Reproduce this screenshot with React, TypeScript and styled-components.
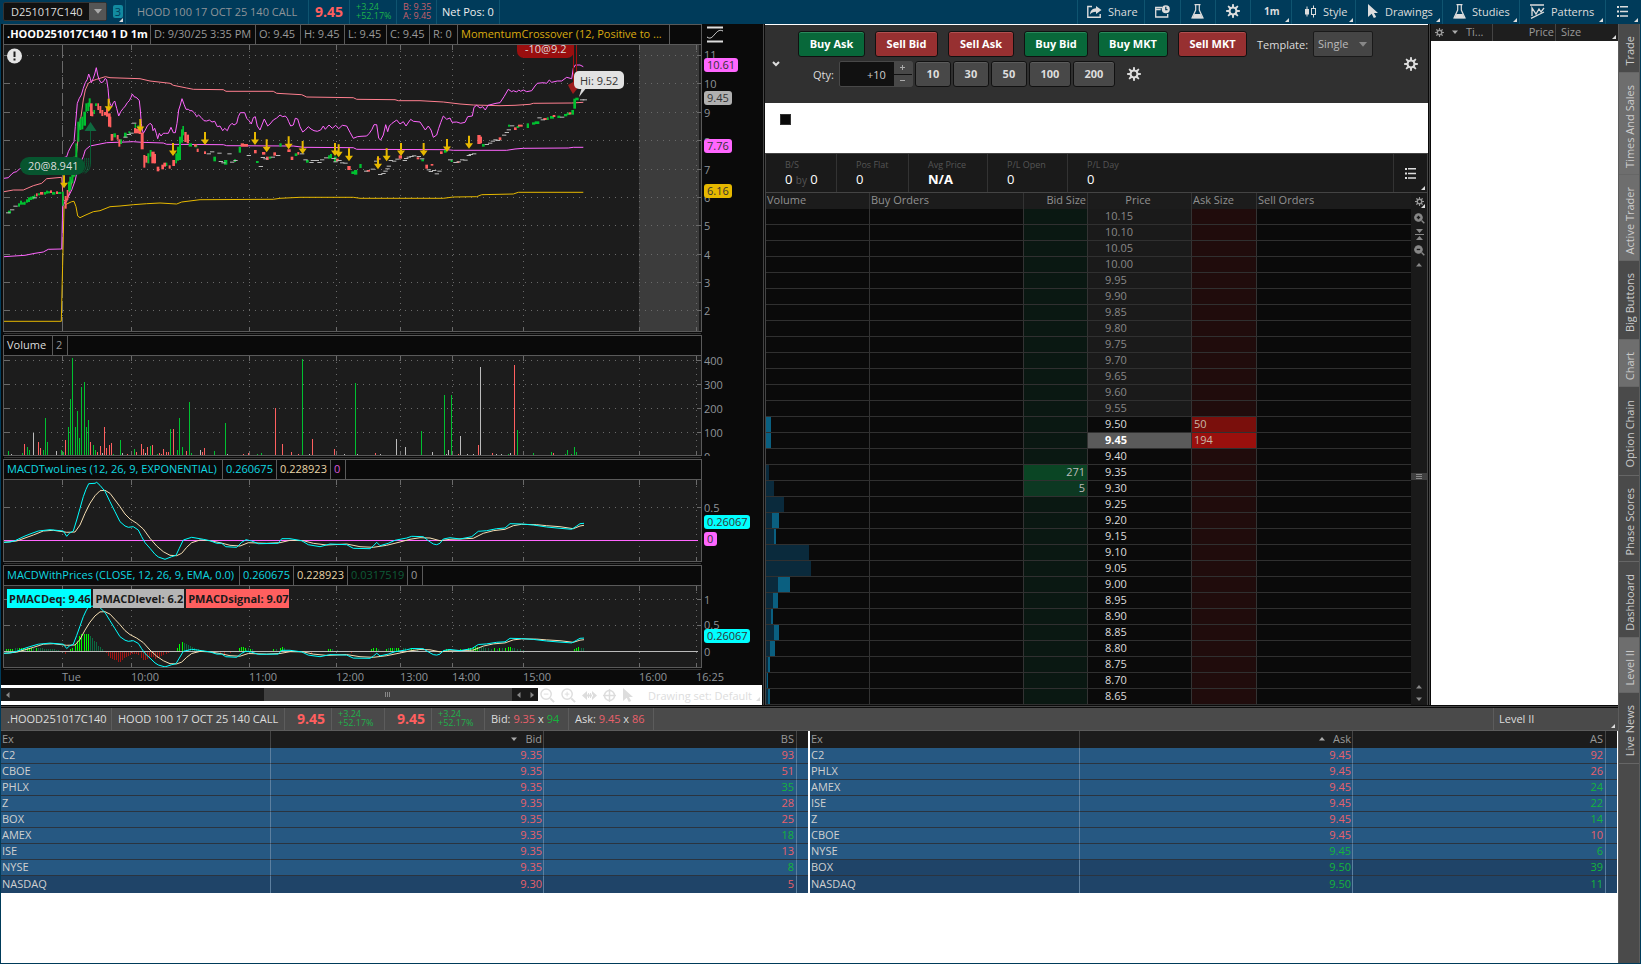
import React from "react";
import styled, { createGlobalStyle, css } from "styled-components";

const GlobalStyle = createGlobalStyle`
  * { box-sizing: border-box; }
  body { margin: 0; background: #fff; }
  body, button, input, select {
    font-family: "Open Sans", "Noto Sans", sans-serif;
    font-size: 11px;
    line-height: 15px;
  }
  button, input, select { margin: 0; padding: 0; border: 0; background: none; color: inherit; border-radius: 0; }
  button { cursor: pointer; }
  svg { display: block; flex: none; }
`;

const GREEN = "#00c030";
const RED = "#ff5f5f";
const MAGENTA = "#ff66ff";
const CYAN = "#00ffff";
const CREAM = "#f5deb3";
const YELLOW = "#e6b800";
const NAVY = "#003b5a";

/* ---------- shell ---------- */

const Shell = styled.div`
  display: flex;
  flex-direction: column;
  min-height: 100vh;
  background: ${NAVY};
  border: solid ${NAVY};
  border-width: 0 0 1px 1px;
  color: #ddd;
`;

const Body = styled.div`
  flex: 1;
  display: grid;
  grid-template-columns: minmax(0, 1fr) 22px;
  padding-right: 1px;
`;

const Workspace = styled.div`
  display: flex;
  flex-direction: column;
  background: #fff;
`;

const Panes = styled.div`
  display: grid;
  grid-template-columns: minmax(0, 761fr) 3px minmax(0, 663fr) 3px minmax(0, 187fr);
`;

const SplitV = styled.div`
  background: linear-gradient(90deg, #0a0a0a 0 1px, #444 1px 2px, #0a0a0a 2px);
`;

const SplitH = styled.div`
  height: 3px;
  flex: none;
  background: linear-gradient(#0a0a0a 0 1px, #444 1px 2px, #0a0a0a 2px);
`;

const Corner = styled.span`
  position: absolute;
  right: 2px;
  bottom: 2px;
  border: solid transparent;
  border-width: 2px;
  border-right-color: ${(p: { $c?: string }) => p.$c || "#ddd"};
  border-bottom-color: ${(p: { $c?: string }) => p.$c || "#ddd"};
`;

/* ---------- top bar ---------- */

const TopBar = styled.header`
  display: flex;
  height: 24px;
  background: ${NAVY};
`;

const barCell = css<{ $w: number; $pad?: number; $c?: string; $line?: string }>`
  position: relative;
  flex: none;
  display: flex;
  align-items: center;
  gap: 6px;
  width: ${(p) => p.$w}px;
  padding-left: ${(p) => p.$pad ?? 6}px;
  padding-bottom: 2px;
  color: ${(p) => p.$c || "#ddd"};
  border-right: 1px solid ${(p) => p.$line || "#0f5470"};
  white-space: nowrap;
`;

const BarCell = styled.div`${barCell}`;
const BarButton = styled.button`${barCell}`;

const Interval = styled.strong`font-size: 10px;`;

const Spacer = styled.div`flex: 1;`;

const SymbolBox = styled.div`
  display: flex;
  width: 104px;
  height: 19px;
  background: #111;
  border: 1px solid #333;
  border-radius: 2px;
`;

const SymbolInput = styled.input`
  flex: 1;
  min-width: 0;
  padding-left: 7px;
  color: #ddd;
  outline: 0;
`;

const DropButton = styled.button`
  width: 17px;
  display: grid;
  place-items: center;
  background: #555;
`;

const LinkButton = styled.button`
  width: 10px;
  height: 13px;
  border-radius: 2px;
  background: #128aa0;
  color: #003b5a;
  line-height: 13px;
`;

const BigPrice = styled.strong`
  font-size: 14px;
  color: ${RED};
`;

const Stack = styled.span`
  display: flex;
  flex-direction: column;
  font-size: 9px;
  line-height: 9px;
  color: ${(p: { $c: string }) => p.$c};
`;

const Tint = styled.span`color: ${(p: { $c: string }) => p.$c};`;

/* ---------- icons ---------- */

const Gear = ({ size = 13, color = "#ddd" }: { size?: number; color?: string }) => (
  <svg width={size} height={size} viewBox="0 0 14 14" fill="none" stroke={color}>
    <circle cx="7" cy="7" r="3.400" strokeWidth="1.900" />
    {[0, 45, 90, 135, 180, 225, 270, 315].map((a) => (
      <path key={a} d="M7.700 0 L8.300 3.400 L5.700 3.400 L6.300 0 Z" fill={color} stroke="none" transform={`rotate(${a} 7 7)`} />
    ))}
  </svg>
);

const ShareIcon = () => (
  <svg width="15" height="13" viewBox="0 0 15 13" fill="none" stroke="#ddd">
    <path d="M5 1.500H.8v10.700h12.400V9" strokeWidth="1.400" />
    <path d="M9 1l5.500 4L9 9V6.700C6 6.700 4.500 7.500 3 9.500 3.300 5.500 5.500 3.500 9 3.300z" fill="#ddd" stroke="none" />
  </svg>
);

const AlertIcon = () => (
  <svg width="15" height="13" viewBox="0 0 15 13" fill="none" stroke="#ddd">
    <path d="M7 2.500H.7v9.500h12V9M.7 4.500h5" strokeWidth="1.300" />
    <circle cx="10.800" cy="4.200" r="4" fill="#ddd" stroke="none" />
    <path d="M10.800 1.800v2.800h1.700" stroke={NAVY} strokeWidth="1.200" />
  </svg>
);

const Flask = () => (
  <svg width="13" height="15" viewBox="0 0 13 15" fill="none" stroke="#ddd">
    <path d="M3.500.7h6M4.700 1v5L1 14h11L8.300 6V1" strokeWidth="1.200" />
    <path d="M3.300 10h6.400l2 4.200H1.300z" fill="#ddd" stroke="none" />
  </svg>
);

const CandleIcon = () => (
  <svg width="13" height="13" viewBox="0 0 13 13" fill="none" stroke="#ddd">
    <path d="M3 1.500v10M9.500.5v3M9.500 9.500v3" />
    <rect x="1" y="4" width="4" height="5.500" fill="#ddd" stroke="none" />
    <rect x="7.500" y="3.500" width="4" height="6" />
  </svg>
);

const Pointer = ({ color = "#ddd" }: { color?: string }) => (
  <svg width="12" height="14" viewBox="0 0 12 14">
    <path d="M1 0l10 9H7l2.200 4-2.400 1L4.700 9.800 1 13z" fill={color} />
  </svg>
);

const PatternIcon = () => (
  <svg width="15" height="15" viewBox="0 0 15 15" fill="none" stroke="#ddd" strokeWidth="1.300">
    <path d="M0 1h14M1 14.300L14 8M2 12V4l4 6 3-5 2 3 3-4" />
  </svg>
);

const ListIcon = () => (
  <svg width="11" height="11" viewBox="0 0 11 11" fill="#ddd">
    <path d="M0 0h2v2H0zM3 0h8v1.500H3zM0 4.500h2v2H0zM3 4.700h8v1.500H3zM0 9h2v2H0zM3 9.200h8v1.500H3z" />
  </svg>
);

const Tri = ({ dir, size = 6, color = "#aaa" }: { dir: "up" | "down" | "left" | "right"; size?: number; color?: string }) => {
  const turn = { up: 0, right: 90, down: 180, left: 270 }[dir];
  return (
    <svg width={size} height={size} viewBox="0 0 6 6">
      <path d="M0 4.500L3 1l3 3.500z" fill={color} transform={`rotate(${turn} 3 3)`} />
    </svg>
  );
};

const Lens = ({ sign, color, filled, size }: { sign: "+" | "-"; color: string; filled?: boolean; size: number }) => (
  <svg width={size} height={size} viewBox="0 0 16 16" fill="none" stroke={color} strokeWidth="1.500">
    <circle cx="6.500" cy="6.500" r="5.500" fill={filled ? color : "none"} />
    <path d="M11 11l4 4" strokeWidth="2" />
    <path d={sign === "+" ? "M4 6.500h5M6.500 4v5" : "M4 6.500h5"} stroke={filled ? "#1a1a1a" : color} strokeWidth={filled ? 2 : 1} />
  </svg>
);

/* ---------- chart ---------- */

const ChartPane = styled.section`
  display: flex;
  flex-direction: column;
  gap: 3px;
  padding-left: 2px;
  background: #0a0a0a;
`;

const Study = styled.div`
  display: grid;
  grid-template-columns: minmax(0, 1fr) 60px;
`;

const StudyBox = styled.div`
  border: 1px solid #5a5a5a;
  box-shadow: 0 2px 0 -1px #0a0a0a, 0 3px 0 -1px #333;
`;

const StudyHead = styled.div`
  display: flex;
  height: 20px;
  border-bottom: 1px solid #5a5a5a;
  overflow: hidden;
`;

const HeadCell = styled.div<{ $w: number; $c?: string; $b?: boolean }>`
  flex: none;
  width: ${(p) => p.$w}px;
  padding-left: 3px;
  line-height: 18px;
  border-right: 1px solid #5a5a5a;
  color: ${(p) => p.$c || "#999"};
  font-weight: ${(p) => (p.$b ? 700 : 400)};
  white-space: nowrap;
`;

const PlotWrap = styled.div`
  position: relative;
  background: #1c1c1c;
`;

const TagRow = styled.div`
  position: absolute;
  top: 3px;
  left: 3px;
  display: flex;
  gap: 2px;
`;

const PriceTag = styled.span<{ $bg: string }>`
  padding: 0 1px 0 2px;
  line-height: 19px;
  font-weight: 700;
  color: #1a1a1a;
  background: ${(p) => p.$bg};
  white-space: nowrap;
`;

const TICKS_X = [131, 249, 336, 400, 452, 523];

/* Plot coordinates are in workspace pixels; the group shift brings them to the plot's own origin. */
const Plot = ({ top, h, rows, children, shade }: { top: number; h: number; rows: number[]; children?: React.ReactNode; shade?: boolean }) => {
  const bottom = top + h;
  return (
    <svg width="100%" height={h} shapeRendering="auto">
      <g transform={`translate(-4 ${-top})`}>
        {shade && <rect x="639" y={top} width="60" height={h} fill="#3c3c3c" />}
        <g stroke="#6a6a6a" shapeRendering="crispEdges">
          {rows.map((y) => (
            <g key={y}>
              <line x1="9" x2="699" y1={y + 0.5} y2={y + 0.5} strokeDasharray="1 5" />
              <path d={`M4 ${y + 0.5}h5M697 ${y + 0.5}h4`} />
            </g>
          ))}
          <line x1="62.5" x2="62.5" y1={top} y2={bottom} strokeDasharray={shade ? "12 4" : "1 5"} />
          {[62, ...TICKS_X, 639, 696].map((x) => (
            <g key={x}>
              <line x1={x + 0.5} x2={x + 0.5} y1={top} y2={bottom} strokeDasharray="1 5" />
              <path d={`M${x + 0.5} ${top}v5M${x + 0.5} ${bottom}v-4`} />
            </g>
          ))}
        </g>
        {children}
      </g>
    </svg>
  );
};

/* Series are stored at three units per pixel. */
const toPoints = (s: string, f: (y: number) => number = (y) => y) =>
  s.trim().split(/\s+/).map((p) => {
    const [x, y] = p.split(",").map(Number);
    return `${(x / 3).toFixed(1)},${(f(y) / 3).toFixed(1)}`;
  }).join(" ");

const Line = ({ data, color, map }: { data: string; color: string; map?: (y: number) => number }) => (
  <polyline points={toPoints(data, map)} fill="none" stroke={color} strokeWidth="1" />
);

const UPPER = `12,535 25,533 35,522 42,517 50,515 58,507 66,503 120,495 200,470 205,455 215,435 222,425 226,380 232,310 238,295 244,285 250,265 256,248 262,238 266,222 271,235 274,248 280,235 284,222 289,203 293,225 297,238 303,248 310,245 316,235 320,240 324,265 327,300 330,310 335,320 340,308 344,303 350,325 356,348 362,335 370,325 376,318 382,308 388,302 393,292 397,282 402,290 408,292 414,297 418,302 421,330 424,370 427,390 430,400 436,390 442,378 450,370 456,375 459,392 464,385 469,400 473,416 478,400 483,408 490,400 497,400 505,400 513,382 520,398 526,398 531,370 536,330 541,315 546,296 552,313 558,328 565,328 570,332 576,332 584,340 590,350 596,345 603,352 612,362 620,363 628,360 636,366 644,364 652,380 660,378 668,392 674,385 682,392 688,378 696,370 702,375 710,370 715,350 721,338 734,338 740,355 747,362 754,372 760,353 766,350 772,378 780,390 787,372 793,357 803,378 810,372 820,360 830,354 840,345 848,350 856,348 862,355 866,365 872,378 880,375 886,355 893,357 900,380 908,396 916,390 925,380 933,387 942,392 952,394 962,390 970,378 976,388 987,375 997,385 1007,376 1016,386 1027,376 1040,378 1050,397 1060,415 1072,410 1083,409 1100,408 1108,400 1116,388 1122,374 1130,374 1136,415 1142,420 1150,405 1157,374 1163,395 1168,378 1176,370 1190,360 1200,372 1210,365 1218,378 1226,366 1232,358 1240,364 1260,366 1268,378 1276,390 1285,378 1293,390 1300,412 1310,405 1316,385 1322,368 1330,348 1340,358 1350,354 1356,367 1370,366 1382,370 1395,367 1403,350 1417,348 1422,322 1430,316 1440,324 1448,320 1456,330 1464,316 1476,313 1488,310 1500,308 1512,290 1525,268 1535,275 1540,272 1550,276 1556,270 1562,274 1570,270 1580,275 1595,272 1605,258 1612,250 1630,248 1640,250 1648,240 1655,247 1672,243 1685,243 1700,232 1715,236 1720,205 1726,195 1740,195 1750,200`;
const AVERAGE = `12,575 40,570 70,570 100,557 125,550 140,536 185,532 190,600 200,605 210,570 225,500 232,440 236,390 243,350 250,300 256,270 265,250 275,243 290,238 316,230 330,233 420,236 450,243 510,250 520,256 560,264 580,268 670,269 678,274 820,274 830,280 905,284 920,291 1060,293 1070,298 1185,299 1195,302 1260,302 1330,306 1380,312 1420,315 1500,317 1545,316 1590,313 1600,310 1715,309 1750,307`;
const MIDDLE = `12,770 75,766 105,760 130,756 145,748 185,747 188,620 195,605 205,590 215,570 226,540 232,510 240,490 250,470 256,450 270,438 320,428 400,425 425,427 490,429 500,433 670,434 680,437 880,438 910,442 1060,443 1070,448 1340,449 1360,451 1520,451 1545,447 1570,445 1705,444 1720,442 1750,442`;
const LOWER = `12,964 184,964 192,620 200,612 215,605 222,604 228,620 233,648 240,653 255,646 280,635 300,632 330,620 360,618 400,614 440,611 480,609 530,612 545,606 600,599 820,598 840,595 900,592 1060,592 1080,595 1330,595 1360,591 1430,590 1445,584 1540,582 1555,577 1750,577`;

const UP_CANDLES = `24,632,8,9 54,610,10,6 60,602,12,6 66,607,7,8 72,605,9,5 78,598,10,6 84,592,14,6 90,590,10,6 96,588,10,6 102,584,11,4 114,580,6,6 132,576,8,6 138,572,9,6 144,574,6,6 156,576,8,10 174,576,6,10 186,575,42,5 204,545,30,6 208,530,40,6 214,520,30,6 220,470,60,6 226,430,80,6 232,365,60,6 238,355,35,6 244,350,38,6 250,335,42,8 256,310,25,6 262,308,25,6 266,295,25,6 280,330,12,5 285,310,8,6 340,400,12,8 360,418,14,6 372,398,14,8 385,394,6,6 404,372,25,4 412,376,8,6 442,460,30,6 449,450,20,6 496,488,10,6 526,460,30,5 531,440,42,6 537,410,70,6 543,388,40,6 547,378,28,5 566,430,10,10 584,434,8,8 640,470,14,8 672,480,14,10 702,478,8,6 716,440,18,7 768,483,6,8 806,470,6,8 838,430,10,7 884,460,8,8 918,480,8,8 984,466,10,8 990,462,12,6 1002,470,16,8 1054,514,8,8 1062,510,14,10 1078,492,12,7 1264,478,6,8 1332,450,8,8 1352,480,6,6 1446,432,8,8 1524,374,6,6 1550,378,6,8 1580,370,14,7 1596,367,7,10 1604,364,8,14 1640,352,8,6 1650,348,8,12 1672,347,7,9 1692,342,7,10 1700,338,7,12 1714,330,14,8 1720,296,30,8 1726,293,8,10`;
const DOWN_CANDLES = `108,580,9,5 120,576,8,10 150,571,8,6 168,574,8,6 194,588,38,6 200,570,30,5 270,310,38,8 274,335,14,6 292,310,20,5 298,318,22,6 304,330,18,6 312,336,10,6 318,325,25,6 324,340,40,8 329,350,32,5 332,402,20,8 350,405,14,6 355,418,22,6 402,384,16,6 408,386,14,10 416,390,12,8 422,398,50,9 430,465,38,6 436,468,20,6 454,455,35,10 462,462,28,6 470,500,14,8 484,494,14,8 490,488,12,8 506,496,10,6 517,480,18,8 553,396,30,7 560,404,26,7 582,432,8,8 590,446,10,6 612,454,8,6 722,430,10,10 732,432,8,12 762,450,10,8 786,456,8,10 798,470,10,8 820,457,10,8 862,448,8,10 872,470,10,8 892,456,8,6 1008,476,8,8 1042,498,12,10 1100,510,5,10 1130,475,4,12 1196,466,10,10 1250,472,6,8 1276,494,12,8 1292,492,5,8 1320,454,8,8 1370,484,5,8 1432,405,27,10 1438,410,20,8 1496,412,8,8 1542,382,8,8 1554,374,6,14 1630,354,6,10 1658,345,6,8 1706,337,6,8`;
const FLAT_CANDLES = `18,637 30,628 40,617 98,592 370,410 380,402 388,398 396,368 620,460 630,454 652,458 682,460 656,483 664,487 690,485 700,480 740,465 776,498 782,471 790,475 812,470 828,465 900,460 910,478 928,486 932,480 944,480 952,486 960,478 972,472 994,474 1000,484 1012,480 1020,487 1030,488 1092,512 1112,506 1122,482 1134,522 1144,519 1150,512 1156,505 1160,497 1166,480 1176,482 1186,476 1208,480 1212,474 1220,470 1228,468 1236,466 1250,468 1260,475 1280,508 1286,513 1296,510 1304,520 1312,512 1344,478 1360,486 1370,484 1380,478 1390,479 1400,465 1406,462 1416,460 1454,432 1464,428 1472,422 1480,418 1488,420 1506,404 1514,396 1520,388 1530,376 1612,352 1622,358 1680,350 1740,298 1748,298`;

const Candles = ({ data, color }: { data: string; color: string }) => (
  <g fill={color}>
    {data.split(" ").map((c) => {
      const [x, y, h = 2, w = 13] = c.split(",").map(Number);
      return <rect key={c} x={x / 3} y={y / 3} width={w / 3} height={Math.max(1, h / 3)} />;
    })}
  </g>
);

const SELL_MARKS: [number, number][] = [
  [192, 565], [326, 335], [421, 396], [519, 468], [615, 435], [765, 435], [800, 457], [866, 448], [908, 462],
  [1005, 468], [1016, 472], [1047, 484], [1134, 508], [1160, 484], [1203, 468], [1271, 468], [1341, 456], [1407, 446],
];

const PricePlot = () => (
  <Plot top={45} h={286} rows={[55, 83, 112, 140, 169, 197, 225, 254, 282, 310]} shade>
    <Line data={LOWER} color={YELLOW} />
    <Line data={AVERAGE} color="#ff7f8f" />
    <Line data={MIDDLE} color={MAGENTA} />
    <Line data={UPPER} color={MAGENTA} />
    <Candles data={UP_CANDLES} color={GREEN} />
    <Candles data={DOWN_CANDLES} color={RED} />
    <Candles data={FLAT_CANDLES} color="#bbb" />
    <g fill={YELLOW}>
      {SELL_MARKS.map(([x, y]) => (
        <path key={x} transform={`translate(${x / 3} ${y / 3})`} d="M0 0l-4-5.500h3V-13h2v7.500h3z" />
      ))}
    </g>
    <g fill="none" stroke="#0b5c36">
      <path d="M90.500 130v32c0 6-2 9-5 11M88.500 158c1 6-1 13-4 15M86.500 158c1 6-1 13-4 15M84.500 158c1 6-1 13-4 15" />
      <path d="M90.500 122l6 9h-12z" fill="#0f6a40" stroke="none" />
    </g>
    <rect x="20" y="157" width="65" height="18" rx="9" fill="#07552f" />
    <text x="28" y="170" fill="#ddd">20@8.941</text>
    <path d="M573.500 45v40M576.500 45v40" stroke="#a01010" fill="none" />
    <path d="M568 85l5-3 5 3-1 4-4 5-3-5z" fill="#9c1c1c" />
    <rect x="517" y="32" width="57" height="26" rx="7" fill="#9a0f0f" />
    <text x="525" y="53" fill="#ddd">-10@9.2</text>
    <path d="M579 97l3-10 5 0z" fill="#ddd" />
    <rect x="574" y="71" width="50" height="18" rx="5" fill="#e2e2e2" />
    <text x="580" y="85" fill="#333">Hi: 9.52</text>
    <circle cx="14.500" cy="56" r="7.500" fill="#e4e4e4" />
    <path d="M14.500 51.500v5.500M14.500 58.500v2" stroke="#1c1c1c" strokeWidth="2" />
  </Plot>
);

const VOLUME = `25,12g 34,4w 68,6g 73,34r 82,25g 88,16g 100,67w 115,38r 121,22r 130,16g 136,112g 142,40g 169,12w 184,16g 190,10g 196,44r 205,85g 211,167g 217,290g 226,85g 232,133g 238,50g 244,203g 253,218g 259,85g 265,106g 271,38r 280,30g 286,16g 292,10r 301,26r 307,7w 313,85r 319,20r 328,29r 334,35r 340,4g 361,46g 367,7w 382,4r 403,19g 409,10r 424,34r 430,17r 436,6w 442,23r 451,26g 457,29r 472,4g 478,7r 484,4r 490,17r 499,10r 505,8r 511,77g 520,77r 532,14g 538,110g 547,25g 559,13r 568,158g 574,7g 601,16w 607,8r 613,20r 643,13g 676,95g 682,4w 730,4r 745,7r 772,4g 784,7g 826,142r 847,34r 874,10r 895,4r 907,287g 928,4w 937,47r 1003,17r 1033,4w 1066,215g 1072,4w 1126,7r 1141,4w 1189,49w 1216,23w 1264,71g 1297,10w 1333,179g 1339,4w 1345,14w 1354,179g 1375,4r 1381,56w 1402,4w 1420,4w 1435,29r 1441,263w 1477,7r 1489,4w 1504,4w 1525,4g 1531,7w 1543,269r 1552,74g 1600,7g 1654,10g 1660,7r 1696,4g 1702,16g 1714,4g 1723,25g 1729,10g`;
const HIST = `18,6g 24,5g 30,6g 36,6g 45,8d 51,8d 57,8g 63,10g 69,9g 75,9d 81,8g 87,10g 93,10g 99,10d 110,9g 116,8d 122,8d 128,8d 134,7d 140,7d 146,6d 152,5d 158,5d 164,5d 170,4d 176,3d 196,-8r 212,6g 218,8g 226,18g 232,30g 238,46g 244,50g 253,50g 259,50g 265,50g 271,44d 277,38d 283,30d 289,26d 295,16d 301,12d 307,5d 319,-6r 325,-14r 331,-22r 337,-25r 343,-26r 349,-27r 355,-32r 361,-32r 367,-27r 373,-20r 379,-18r 385,-15r 391,-12r 397,-10r 403,-10r 409,-10r 415,-11r 424,-22r 430,-26r 436,-26r 442,-25r 448,-22r 454,-19r 460,-19r 466,-24r 472,-20r 478,-17r 484,-15r 490,-12r 499,-9r 505,-6r 532,10g 538,20g 547,26g 553,24d 559,22d 565,18d 571,14d 577,12d 583,9d 589,7d 595,5d 610,4d 660,-6r 672,-10r 690,-6r 718,9g 724,11g 730,11g 736,10g 745,8d 751,7g 757,6d 820,5g 830,5d 841,10g 847,11g 853,8d 915,-5r 935,-5r 985,5g 991,6g 997,5d 1012,4d 1055,-6r 1115,6g 1121,8g 1130,10g 1136,5d 1160,6g 1166,8d 1172,8g 1178,9g 1184,9d 1190,10g 1196,10g 1211,9d 1217,8d 1235,8g 1241,6d 1253,5d 1340,6g 1346,6g 1382,5g 1405,8g 1411,9g 1420,10g 1426,12g 1432,13g 1438,12d 1444,11d 1450,11d 1456,10d 1465,8d 1474,7d 1483,8g 1492,7d 1498,8g 1507,8d 1516,9g 1525,11g 1531,12g 1537,9d 1543,8d 1552,7d 1561,6d 1570,4d 1723,6g 1729,8g 1735,11g 1744,8d 1750,8d`;

const Bars = ({ data, base, colors }: { data: string; base: number; colors: Record<string, string> }) => (
  <g shapeRendering="crispEdges">
    {data.split(" ").map((b) => {
      const [, x, v, k] = b.match(/^(\d+),(-?\d+)(\w)$/)!;
      const h = Math.max(1, Math.abs(Number(v)) / 3);
      return <rect key={b} x={Math.round(Number(x) / 3 - 0.4)} y={Number(v) < 0 ? base : base - h} width="1" height={h} fill={colors[k]} />;
    })}
  </g>
);

const MACD = `12,1627 30,1626 45,1622 60,1615 75,1608 90,1602 115,1593 150,1589 190,1593 200,1609 208,1600 220,1593 230,1560 240,1525 250,1490 258,1468 266,1451 285,1450 290,1447 300,1456 315,1474 330,1505 345,1535 360,1565 375,1578 385,1582 400,1580 415,1590 425,1610 435,1628 450,1645 465,1663 475,1671 495,1678 515,1670 528,1666 538,1645 550,1620 575,1612 610,1618 630,1622 650,1630 665,1630 677,1640 710,1642 725,1627 738,1619 755,1623 775,1631 835,1630 845,1616 870,1616 905,1622 925,1634 960,1640 990,1632 1040,1634 1060,1645 1110,1646 1120,1638 1130,1627 1140,1637 1165,1630 1185,1621 1200,1618 1220,1614 1235,1609 1270,1610 1285,1622 1300,1632 1310,1634 1320,1630 1330,1617 1350,1613 1380,1617 1415,1610 1435,1594 1460,1592 1490,1586 1515,1584 1530,1571 1565,1572 1600,1575 1640,1581 1680,1585 1715,1588 1730,1578 1740,1571 1752,1570`;
const SIGNAL = `12,1627 50,1623 100,1605 130,1593 160,1591 200,1597 225,1596 240,1575 255,1540 270,1510 285,1487 300,1472 315,1471 330,1480 345,1500 360,1520 375,1542 390,1557 410,1570 430,1587 450,1615 470,1638 490,1655 510,1666 530,1667 545,1660 560,1642 575,1628 600,1620 630,1622 660,1628 690,1636 720,1638 745,1628 800,1630 840,1628 870,1621 910,1622 940,1630 980,1635 1040,1632 1080,1640 1120,1642 1160,1636 1200,1626 1230,1618 1260,1613 1290,1614 1320,1622 1350,1618 1380,1617 1420,1615 1450,1600 1480,1592 1515,1588 1540,1577 1565,1573 1610,1574 1640,1577 1680,1580 1720,1586 1740,1578 1752,1576`;
const toPriceMacd = (y: number) => 1955 + (y - 1621) * 0.8;

const AxisSvg = styled.svg`
  width: 60px;
  height: 0;
  min-height: 100%;
  overflow: hidden;
`;

const Axis = ({ top, labels, tags, children }: {
  top: number;
  labels: [number, string][];
  tags?: [number, string, string, number][];
  children?: React.ReactNode;
}) => (
  <AxisSvg>
    <g transform={`translate(-702 ${-top})`}>
      <g fill="#8f9499">
        {labels.map(([y, t]) => <text key={t} x="704" y={y + 4}>{t}</text>)}
      </g>
      {tags?.map(([y, t, c, w]) => (
        <g key={t}>
          <rect x="704" y={y - 7} width={w} height="14" rx="3" fill={c} />
          <text x="707" y={y + 4} fill="#333">{t}</text>
        </g>
      ))}
      {children}
    </g>
  </AxisSvg>
);

const TimeAxis = styled.svg`
  width: 100%;
  height: 17px;
  margin-top: -3px;
`;

const ScrollRow = styled.div`
  display: flex;
  align-items: center;
  height: 20px;
  margin: -3px 0 0 -2px;
  background: #fff;
  color: #ddd;
  position: relative;
`;

const ScrollTrack = styled.div`
  display: flex;
  flex: 1;
  align-items: stretch;
  height: 13px;
  margin-bottom: 1px;
  background: #1a1a1a;
`;

const ScrollArrow = styled.button`
  width: 13px;
  display: grid;
  place-items: center;
`;

const ScrollThumb = styled.div`
  width: 248px;
  margin-left: auto;
  display: grid;
  place-items: center;
  background: #404040;
  color: #888;
`;

const DrawTools = styled.div`
  position: relative;
  width: 224px;
  display: flex;
  align-items: center;
  padding-left: 2px;
  gap: 6px;
`;

const ToolButton = styled.button`display: grid; place-items: center;`;

const DrawingSet = styled.button`
  margin-left: 8px;
  color: #ddd;
  white-space: nowrap;
`;

const Charts = () => (
  <ChartPane>
    <Study>
      <StudyBox>
        <StudyHead>
          <HeadCell $w={147} $c="#fff" $b>.HOOD251017C140 1 D 1m</HeadCell>
          <HeadCell $w={105}>D: 9/30/25 3:35 PM</HeadCell>
          <HeadCell $w={45}>O: 9.45</HeadCell>
          <HeadCell $w={44}>H: 9.45</HeadCell>
          <HeadCell $w={42}>L: 9.45</HeadCell>
          <HeadCell $w={43}>C: 9.45</HeadCell>
          <HeadCell $w={28}>R: 0</HeadCell>
          <HeadCell $w={212} $c="#d9ab10">MomentumCrossover (12, Positive to ...</HeadCell>
        </StudyHead>
        <PlotWrap><PricePlot /></PlotWrap>
      </StudyBox>
      <Axis
        top={24}
        labels={[[55, "11"], [84, "10"], [113, "9"], [142, "8"], [170, "7"], [198, "6"], [226, "5"], [255, "4"], [283, "3"], [311, "2"]]}
        tags={[[65, "10.61", MAGENTA, 34], [98, "9.45", "#b0b0b0", 28], [146, "7.76", MAGENTA, 28], [191, "6.16", YELLOW, 28]]}
      >
        <rect x="702" y="24" width="60" height="24" fill="#0a0a0a" />
        <path d="M707 27.500h16M707 41.500h16" stroke="#ddd" strokeWidth="2" />
        <path d="M707 37c4 3 6-1 8-3s4-5 8-3" stroke="#ddd" fill="none" />
      </Axis>
    </Study>
    <Study>
      <StudyBox>
        <StudyHead>
          <HeadCell $w={49} $c="#ddd">Volume</HeadCell>
          <HeadCell $w={15}>2</HeadCell>
        </StudyHead>
        <PlotWrap>
          <Plot top={356} h={99} rows={[360, 384, 408, 432]}>
            <Bars data={VOLUME} base={455} colors={{ g: GREEN, r: RED, w: "#bbb" }} />
          </Plot>
        </PlotWrap>
      </StudyBox>
      <Axis top={335} labels={[[361, "400"], [385, "300"], [409, "200"], [433, "100"], [457, "0"]]} />
    </Study>
    <Study>
      <StudyBox>
        <StudyHead>
          <HeadCell $w={219} $c="#10d8e0">MACDTwoLines (12, 26, 9, EXPONENTIAL)</HeadCell>
          <HeadCell $w={54} $c="#10d8e0">0.260675</HeadCell>
          <HeadCell $w={54} $c="#e8d5a8">0.228923</HeadCell>
          <HeadCell $w={15} $c="#d958d9">0</HeadCell>
        </StudyHead>
        <PlotWrap>
          <Plot top={480} h={81} rows={[507]}>
            <path d="M4 540.500H698" stroke={MAGENTA} />
            <Line data={SIGNAL} color={CREAM} />
            <Line data={MACD} color={CYAN} />
          </Plot>
        </PlotWrap>
      </StudyBox>
      <Axis top={459} labels={[[508, "0.5"]]} tags={[[522, "0.26067", CYAN, 46], [539, "0", MAGENTA, 13]]} />
    </Study>
    <Study>
      <StudyBox>
        <StudyHead>
          <HeadCell $w={236} $c="#10d8e0">MACDWithPrices (CLOSE, 12, 26, 9, EMA, 0.0)</HeadCell>
          <HeadCell $w={54} $c="#10d8e0">0.260675</HeadCell>
          <HeadCell $w={54} $c="#e8d5a8">0.228923</HeadCell>
          <HeadCell $w={60} $c="#0f5a38">0.0317519</HeadCell>
          <HeadCell $w={15}>0</HeadCell>
        </StudyHead>
        <PlotWrap>
          <Plot top={586} h={81} rows={[599, 625]}>
            <Bars data={HIST} base={651} colors={{ g: "#00ff00", d: "#0b6a40", r: "#a01414" }} />
            <path d="M4 651.500H698" stroke="#bbb" />
            <Line data={SIGNAL} color={CREAM} map={toPriceMacd} />
            <Line data={MACD} color={CYAN} map={toPriceMacd} />
          </Plot>
          <TagRow>
            <PriceTag $bg={CYAN}>PMACDeq: 9.46</PriceTag>
            <PriceTag $bg="#b5b5b5">PMACDlevel: 6.2</PriceTag>
            <PriceTag $bg={RED}>PMACDsignal: 9.07</PriceTag>
          </TagRow>
        </PlotWrap>
      </StudyBox>
      <Axis top={565} labels={[[600, "1"], [625, "0.5"], [652, "0"]]} tags={[[636, "0.26067", CYAN, 46]]} />
    </Study>
    <TimeAxis>
      <g transform="translate(-3 0)" fill="#8f9499">
        {([[62, "Tue"], [131, "10:00"], [249, "11:00"], [336, "12:00"], [400, "13:00"], [452, "14:00"], [523, "15:00"], [639, "16:00"], [696, "16:25"]] as [number, string][]).map(
          ([x, t]) => <text key={t} x={x} y="13">{t}</text>,
        )}
      </g>
    </TimeAxis>
    <ScrollRow>
      <ScrollTrack>
        <ScrollArrow aria-label="Scroll left"><Tri dir="left" color="#888" /></ScrollArrow>
        <ScrollThumb>
          <svg width="6" height="5" stroke="#888"><path d="M.5 0v5M2.500 0v5M4.500 0v5" /></svg>
        </ScrollThumb>
        <ScrollArrow aria-label="Step left"><Tri dir="left" color="#888" /></ScrollArrow>
        <ScrollArrow aria-label="Step right"><Tri dir="right" color="#888" /></ScrollArrow>
      </ScrollTrack>
      <DrawTools>
        <ToolButton aria-label="Zoom out"><Lens sign="-" color="#ddd" size={15} /></ToolButton>
        <ToolButton aria-label="Zoom in"><Lens sign="+" color="#ddd" size={15} /></ToolButton>
        <ToolButton aria-label="Pan">
          <svg width="15" height="11" viewBox="0 0 15 11" fill="#ddd"><path d="M0 5.500L5 1v9zM15 5.500L10 1v9zM6 3h1v5H6zM8 3h1v5H8zM4 4.500h7v2H4z" /></svg>
        </ToolButton>
        <ToolButton aria-label="Crosshair">
          <svg width="13" height="13" viewBox="0 0 13 13" fill="none" stroke="#ddd" strokeWidth="1.500"><circle cx="6.500" cy="6.500" r="5" /><path d="M6.500 0v13M0 6.500h13" /></svg>
        </ToolButton>
        <ToolButton aria-label="Pointer"><Pointer /></ToolButton>
        <DrawingSet>Drawing set: Default</DrawingSet>
        <Corner />
      </DrawTools>
    </ScrollRow>
  </ChartPane>
);

/* ---------- active trader ---------- */

const Trader = styled.section`
  display: flex;
  flex-direction: column;
  min-width: 0;
  background: #0a0a0a;
`;

const OrderBar = styled.div`
  display: flex;
  justify-content: space-between;
  height: 79px;
  border-top: 1px solid #fff;
  background: #303030;
`;

const SideButton = styled.button`
  width: 34px;
  display: grid;
  place-items: center;
  flex: none;
`;

const CollapseButton = styled(SideButton)`
  width: 33px;
  padding-right: 11px;
`;

const OrderLines = styled.div`
  flex: 1;
  display: flex;
  flex-direction: column;
  gap: 4px;
  padding-top: 6px;
`;

const OrderLine = styled.div<{ $gap: number; $indent?: number }>`
  display: flex;
  align-items: center;
  gap: ${(p) => p.$gap}px;
  padding-left: ${(p) => p.$indent || 0}px;
`;

const OrderButton = styled.button<{ $w: number; $buy?: boolean }>`
  width: ${(p) => p.$w}px;
  height: 26px;
  padding-bottom: 1px;
  flex: none;
  border: 1px solid #111;
  border-radius: 3px;
  background: ${(p) => (p.$buy ? "#08683a" : "#973031")};
  box-shadow: inset 0 1px 0 ${(p) => (p.$buy ? "#2a8a5c" : "#b05050")};
  color: #fff;
  font-weight: 700;
`;

const QtyButton = styled(OrderButton)`
  background: #484848;
  box-shadow: inset 0 1px 0 #5c5c5c;
  color: #ddd;
`;

const TemplateLabel = styled.label`
  display: flex;
  align-items: center;
  gap: 5px;
  white-space: nowrap;
`;

const SelectWrap = styled.span`
  position: relative;
  display: flex;
  svg { position: absolute; right: 6px; top: 9px; pointer-events: none; }
`;

const TemplateSelect = styled.select`
  appearance: none;
  width: 60px;
  height: 26px;
  padding-left: 4px;
  padding-bottom: 1px;
  background: #454545;
  border: 1px solid #1a1a1a;
  border-radius: 2px;
  color: #bbb;
`;

const QtyBox = styled.div`
  display: flex;
  width: 74px;
  height: 26px;
  margin-left: 3px;
  background: #111;
  border: 1px solid #484848;
  border-radius: 2px;
`;

const QtyInput = styled.input`
  flex: 1;
  min-width: 0;
  padding-right: 8px;
  text-align: right;
  color: #ccc;
  outline: 0;
`;

const Steps = styled.div`
  width: 18px;
  display: grid;
  gap: 1px;
  button { background: #484848; display: grid; place-items: center; }
`;

const Notice = styled.div`
  height: 50px;
  background: #fff;
  padding: 11px 15px;
`;

const NoticeBox = styled.div`
  width: 11px;
  height: 11px;
  background: #0a0a0a;
  border: 1px solid #333;
`;

const Positions = styled.dl`
  display: flex;
  margin: 0;
  height: 40px;
  background: #1a1a1a;
  border: 1px solid #444;
`;

const Position = styled.div<{ $w?: number }>`
  ${(p) => (p.$w ? `width: ${p.$w}px; border-right: 1px solid #333;` : "flex: 1;")}
  padding: 5px 0 0 19px;
  dt { font-size: 9px; line-height: 11px; color: #555; }
  dd { margin: 0; font-size: 13px; line-height: 18px; color: #fff; white-space: nowrap; }
  small { font-size: 10px; color: #555; }
`;

const MenuButton = styled.button`
  position: relative;
  width: 34px;
  display: grid;
  place-items: center;
  border-left: 1px solid #333;
`;

const LadderArea = styled.div`
  display: flex;
  border: solid #444;
  border-width: 0 1px;
`;

const Ladder = styled.table`
  flex: 1;
  min-width: 0;
  table-layout: fixed;
  width: 100%;
  border-spacing: 0;
  th, td { padding: 0; height: 16px; line-height: 13px; vertical-align: top; border-right: 1px solid #333; }
  th { font-weight: 400; text-align: left; color: #909090; background: #1c1c1c; padding-left: 1px; }
  td { border-bottom: 1px solid #303030; }
  th:last-child, td:last-child { border-right: 0; }
`;

const EndHead = styled.th`&&& { text-align: right; padding-right: 1px; }`;
const MidHead = styled.th`&&& { text-align: center; padding-right: 4px; }`;

const BidCell = styled.td<{ $on?: string }>`
  &&& { background: ${(p) => p.$on || "#0a1812"}; text-align: right; padding-right: 2px; color: #bbb; }
`;
const AskCell = styled.td<{ $on?: string }>`
  &&& { background: ${(p) => p.$on || "#200c0c"}; padding-left: 2px; color: #c8b8a8; }
`;
const PriceCell = styled.td<{ $kind: "off" | "on" | "last" }>`
  &&& {
    padding-left: 17px;
    background: ${(p) => ({ off: "#1a1a1a", on: "#0a0a0a", last: "#5a5a5a" })[p.$kind]};
    color: ${(p) => ({ off: "#888", on: "#ddd", last: "#fff" })[p.$kind]};
    font-weight: ${(p) => (p.$kind === "last" ? 700 : 400)};
  }
`;
const VolumeBar = styled.div`
  display: flex;
  height: 15px;
  i { background: #0a2a3c; }
  b { background: #0a5f80; }
`;

const LadderSide = styled.div`
  width: 16px;
  display: flex;
  flex-direction: column;
  align-items: center;
  background: #1a1a1a;
`;

const SideIcon = styled.button<{ $h: number }>`
  position: relative;
  width: 16px;
  height: ${(p) => p.$h}px;
  display: grid;
  place-items: center;
`;

const SideThumb = styled.div`
  width: 16px;
  height: 7px;
  background: #404040;
  display: grid;
  place-items: center;
`;

const PRICES = Array.from({ length: 31 }, (_, i) => ((1015 - i * 5) / 100).toFixed(2));
const VOL_AT: Record<string, [number, number]> = {
  "9.50": [0, 5], "9.45": [0, 5], "9.35": [3, 0], "9.30": [8, 0], "9.25": [18, 0], "9.20": [6, 7], "9.15": [8, 2],
  "9.10": [43, 0], "9.05": [45, 0], "9.00": [12, 12], "8.95": [7, 5], "8.90": [5, 2], "8.85": [8, 5],
  "8.80": [4, 5], "8.75": [2, 2], "8.70": [1, 1], "8.65": [2, 2],
};
const BIDS: Record<string, [string, string]> = { "9.35": ["271", "#0a4524"], "9.30": ["5", "#0d3822"] };
const ASKS: Record<string, [string, string]> = { "9.50": ["50", "#7a0f0c"], "9.45": ["194", "#9a100d"] };

const ActiveTrader = () => (
  <Trader>
    <OrderBar>
      <CollapseButton aria-label="Collapse">
        <svg width="8" height="6" fill="none" stroke="#ddd" strokeWidth="2"><path d="M1 1l3 3 3-3" /></svg>
      </CollapseButton>
      <OrderLines>
        <OrderLine $gap={10}>
          <OrderButton $w={67} $buy>Buy Ask</OrderButton>
          <OrderButton $w={63}>Sell Bid</OrderButton>
          <OrderButton $w={66}>Sell Ask</OrderButton>
          <OrderButton $w={64} $buy>Buy Bid</OrderButton>
          <OrderButton $w={70} $buy>Buy MKT</OrderButton>
          <OrderButton $w={69}>Sell MKT</OrderButton>
          <TemplateLabel>
            Template:
            <SelectWrap>
              <TemplateSelect defaultValue="Single"><option>Single</option></TemplateSelect>
              <Tri dir="down" size={8} color="#888" />
            </SelectWrap>
          </TemplateLabel>
        </OrderLine>
        <OrderLine $gap={2} $indent={15}>
          <label htmlFor="qty">Qty:</label>
          <QtyBox>
            <QtyInput id="qty" defaultValue="+10" />
            <Steps>
              <button aria-label="Increase"><svg width="5" height="5" stroke="#aaa"><path d="M0 2.500h5M2.500 0v5" /></svg></button>
              <button aria-label="Decrease"><svg width="5" height="5" stroke="#aaa"><path d="M0 2.500h5" /></svg></button>
            </Steps>
          </QtyBox>
          {[["10", 36], ["30", 36], ["50", 36], ["100", 42], ["200", 42]].map(([t, w]) => (
            <QtyButton key={t} $w={w as number}>{t}</QtyButton>
          ))}
          <SideButton aria-label="Quantity settings"><Gear size={14} /></SideButton>
        </OrderLine>
      </OrderLines>
      <SideButton aria-label="Settings"><Gear size={14} /></SideButton>
    </OrderBar>
    <Notice><NoticeBox /></Notice>
    <Positions>
      <Position $w={71}><dt>B/S</dt><dd>0 <small>by</small> 0</dd></Position>
      <Position $w={72}><dt>Pos Flat</dt><dd>0</dd></Position>
      <Position $w={79}><dt>Avg Price</dt><dd><strong>N/A</strong></dd></Position>
      <Position $w={80}><dt>P/L Open</dt><dd>0</dd></Position>
      <Position><dt>P/L Day</dt><dd>0</dd></Position>
      <MenuButton aria-label="Menu"><ListIcon /><Corner /></MenuButton>
    </Positions>
    <LadderArea>
      <Ladder>
        <colgroup>
          <col style={{ width: 104 }} /><col style={{ width: 154 }} /><col style={{ width: 64 }} />
          <col style={{ width: 104 }} /><col style={{ width: 65 }} /><col />
        </colgroup>
        <thead>
          <tr><th>Volume</th><th>Buy Orders</th><EndHead>Bid Size</EndHead><MidHead>Price</MidHead><th>Ask Size</th><th>Sell Orders</th></tr>
        </thead>
        <tbody>
          {PRICES.map((p) => (
            <tr key={p}>
              <td>
                {VOL_AT[p] && (
                  <VolumeBar><i style={{ width: VOL_AT[p][0] }} /><b style={{ width: VOL_AT[p][1] }} /></VolumeBar>
                )}
              </td>
              <td />
              <BidCell $on={BIDS[p]?.[1]}>{BIDS[p]?.[0]}</BidCell>
              <PriceCell $kind={p === "9.45" ? "last" : Number(p) > 9.52 ? "off" : "on"}>{p}</PriceCell>
              <AskCell $on={ASKS[p]?.[1]}>{ASKS[p]?.[0]}</AskCell>
              <td />
            </tr>
          ))}
        </tbody>
      </Ladder>
      <LadderSide>
        <SideIcon $h={17} aria-label="Columns"><Gear size={9} color="#999" /><Corner /></SideIcon>
        <SideIcon $h={16} aria-label="Zoom in"><Lens sign="+" color="#888" filled size={11} /></SideIcon>
        <SideIcon $h={16} aria-label="Center">
          <svg width="9" height="11" viewBox="0 0 9 11" fill="#888"><path d="M1 0h7L4.500 4zM0 5h9v1H0zM1 11h7L4.500 7z" /></svg>
        </SideIcon>
        <SideIcon $h={16} aria-label="Zoom out"><Lens sign="-" color="#888" filled size={11} /></SideIcon>
        <SideIcon $h={14} aria-label="Page up"><Tri dir="up" color="#888" /></SideIcon>
        <Spacer />
        <SideThumb><svg width="6" height="5" stroke="#888"><path d="M0 .5h6M0 2.500h6M0 4.500h6" /></svg></SideThumb>
        <Spacer />
        <SideIcon $h={13} aria-label="Scroll up"><Tri dir="up" color="#888" /></SideIcon>
        <SideIcon $h={12} aria-label="Scroll down"><Tri dir="down" color="#888" /></SideIcon>
      </LadderSide>
    </LadderArea>
  </Trader>
);

/* ---------- time and sales ---------- */

const Tape = styled.section`background: #fff;`;

const TapeHead = styled.div`
  position: relative;
  display: flex;
  align-items: center;
  height: 17px;
  background: #1e1e1e;
  color: #999;
`;

const TapeCell = styled.div<{ $w?: number; $end?: boolean }>`
  ${(p) => (p.$w ? `width: ${p.$w}px; border-right: 1px solid #444;` : "flex: 1; padding-left: 5px;")}
  display: flex;
  align-items: center;
  height: 17px;
  line-height: 16px;
  gap: 8px;
  justify-content: ${(p) => (p.$end ? "flex-end" : "flex-start")};
  padding-right: 1px;
  padding-bottom: 1px;
`;

const IconPad = styled.span`padding-left: 4px;`;

/* ---------- level II ---------- */

const LevelBar = styled.div`
  display: flex;
  height: 23px;
  background: #4a4a4a;
  border-bottom: 1px solid #5c5c5c;
  color: #ddd;
`;

const Books = styled.div`
  display: grid;
  grid-template-columns: minmax(0, 1fr) minmax(0, 1fr);
  gap: 2px;
  padding-right: 1px;
`;

const Book = styled.table`
  width: 100%;
  table-layout: fixed;
  border-spacing: 0;
  align-self: start;
  th, td { padding: 0 1px; vertical-align: top; text-align: right; border-right: 1px solid #5c7f9f; }
  th { height: 17px; font-weight: 400; color: #999; background: #1c1c1c; border-right-color: #444; }
  td { height: 16px; line-height: 13px; border-bottom: 1px solid #2a3440; }
  th:first-child, td:first-child { text-align: left; }
  th:nth-child(3), td:nth-child(3) { padding-right: 2px; }
  th:last-child, td:last-child { border-right: 0; }
  tbody tr:last-child td { height: 17px; line-height: 15px; border-bottom: 0; }
`;

const BookRow = styled.tr<{ $deep: boolean }>`
  background: ${(p) => (p.$deep ? "#1f4468" : "#265882")};
  color: #d0d0d0;
`;

const SortHead = styled.span`
  display: flex;
  justify-content: flex-end;
  align-items: center;
  gap: 8px;
`;

const BookNum = styled.td<{ $up: boolean }>`color: ${(p) => (p.$up ? "#14b43c" : "#e8606a")};`;

type Quote = [string, string, boolean, string, boolean, boolean?];
const BID_ROWS: Quote[] = [
  ["C2", "9.35", false, "93", false], ["CBOE", "9.35", false, "51", false], ["PHLX", "9.35", false, "35", true],
  ["Z", "9.35", false, "28", false], ["BOX", "9.35", false, "25", false], ["AMEX", "9.35", false, "18", true],
  ["ISE", "9.35", false, "13", false], ["NYSE", "9.35", false, "8", true], ["NASDAQ", "9.30", false, "5", false, true],
];
const ASK_ROWS: Quote[] = [
  ["C2", "9.45", false, "92", false], ["PHLX", "9.45", false, "26", false], ["AMEX", "9.45", false, "24", true],
  ["ISE", "9.45", false, "22", true], ["Z", "9.45", false, "14", true], ["CBOE", "9.45", false, "10", false],
  ["NYSE", "9.45", true, "6", true], ["BOX", "9.50", true, "39", true, true], ["NASDAQ", "9.50", true, "11", true, true],
];

const QuoteBook = ({ rows, side, size, dir }: { rows: Quote[]; side: string; size: string; dir: "up" | "down" }) => (
  <Book>
    <colgroup><col style={{ width: 270 }} /><col style={{ width: 273 }} /><col /><col style={{ width: 11 }} /></colgroup>
    <thead>
      <tr><th>Ex</th><th><SortHead><Tri dir={dir} />{side}</SortHead></th><th>{size}</th><th /></tr>
    </thead>
    <tbody>
      {rows.map(([ex, px, pxUp, n, nUp, deep]) => (
        <BookRow key={ex} $deep={!!deep}>
          <td>{ex}</td><BookNum $up={pxUp}>{px}</BookNum><BookNum $up={nUp}>{n}</BookNum><td />
        </BookRow>
      ))}
    </tbody>
  </Book>
);

/* ---------- gadget rail ---------- */

const Rail = styled.nav`
  display: flex;
  flex-direction: column;
  background: #4a4a4a;
  border: 1px solid #5c5c5c;
  border-width: 0 1px;
`;

const RailTab = styled.button<{ $h: number; $on?: boolean }>`
  height: ${(p) => p.$h}px;
  flex: none;
  display: grid;
  place-items: center;
  padding-top: 6px;
  background: ${(p) => (p.$on ? "#6e6e6e" : "#4a4a4a")};
  border-bottom: 1px solid #666;
  color: #ccc;
  span { writing-mode: vertical-rl; transform: rotate(180deg); white-space: nowrap; }
`;

const TABS: [string, number, boolean?][] = [
  ["Trade", 49], ["Times And Sales", 102, true], ["Active Trader", 86, true], ["Big Buttons", 79], ["Chart", 47, true],
  ["Option Chain", 89], ["Phase Scores", 86], ["Dashboard", 76], ["Level II", 55, true], ["Live News", 71],
];

export default function App() {
  return (
    <>
      <GlobalStyle />
      <Shell>
        <TopBar>
          <BarCell $w={125} $pad={2}>
            <SymbolBox>
              <SymbolInput aria-label="Symbol" defaultValue="D251017C140" />
              <DropButton aria-label="Symbols"><Tri dir="down" size={8} /></DropButton>
            </SymbolBox>
            <LinkButton aria-label="Link group 3">3</LinkButton>
            <Corner />
          </BarCell>
          <BarCell $w={183} $pad={11} $c="#8f9499">HOOD 100 17 OCT 25 140 CALL</BarCell>
          <BarCell $w={41}><BigPrice>9.45</BigPrice></BarCell>
          <BarCell $w={47}><Stack $c="#1fb04a"><span>+3.24</span><span>+52.17%</span></Stack></BarCell>
          <BarCell $w={40}><Stack $c="#c8606a"><span>B: 9.35</span><span>A: 9.45</span></Stack></BarCell>
          <BarCell $w={63} $pad={5} $c="#eee">Net Pos: 0</BarCell>
          <Spacer />
          <BarCell $w={1} $pad={0} />
          <BarButton $w={67} $pad={9}><ShareIcon />Share</BarButton>
          <BarButton $w={36} $pad={10} aria-label="Alerts"><AlertIcon /></BarButton>
          <BarButton $w={35} $pad={10} aria-label="Lab"><Flask /></BarButton>
          <BarButton $w={35} $pad={10} aria-label="Settings"><Gear size={14} /></BarButton>
          <BarButton $w={41} $pad={13}><Interval>1m</Interval><Corner /></BarButton>
          <BarButton $w={64} $pad={12}><CandleIcon />Style<Corner /></BarButton>
          <BarButton $w={87} $pad={11}><Pointer />Drawings<Corner /></BarButton>
          <BarButton $w={77} $pad={10}><Flask />Studies<Corner /></BarButton>
          <BarButton $w={86} $pad={10}><PatternIcon />Patterns<Corner /></BarButton>
          <BarButton $w={35} $pad={11} $line={NAVY} aria-label="Menu"><ListIcon /><Corner /></BarButton>
        </TopBar>
        <Body>
          <Workspace>
            <Panes>
              <Charts />
              <SplitV />
              <ActiveTrader />
              <SplitV />
              <Tape>
                <TapeHead>
                  <TapeCell $w={62}><IconPad><Gear size={9} color="#999" /></IconPad><Tri dir="down" />Ti...</TapeCell>
                  <TapeCell $w={63} $end>Price</TapeCell>
                  <TapeCell>Size</TapeCell>
                  <Corner />
                </TapeHead>
              </Tape>
            </Panes>
            <SplitH />
            <LevelBar>
              <BarCell $w={111} $line="#5c5c5c">.HOOD251017C140</BarCell>
              <BarCell $w={173} $line="#5c5c5c">HOOD 100 17 OCT 25 140 CALL</BarCell>
              <BarCell $w={47} $pad={12} $line="#5c5c5c"><BigPrice>9.45</BigPrice></BarCell>
              <BarCell $w={53} $line="#5c5c5c"><Stack $c="#1fb04a"><span>+3.24</span><span>+52.17%</span></Stack></BarCell>
              <BarCell $w={47} $pad={12} $line="#5c5c5c"><BigPrice>9.45</BigPrice></BarCell>
              <BarCell $w={53} $line="#5c5c5c"><Stack $c="#1fb04a"><span>+3.24</span><span>+52.17%</span></Stack></BarCell>
              <BarCell $w={84} $line="#5c5c5c"><span>Bid: <Tint $c="#e8606a">9.35</Tint> x <Tint $c="#14b43c">94</Tint></span></BarCell>
              <BarCell $w={85} $line="#5c5c5c"><span>Ask: <Tint $c="#e8606a">9.45</Tint> x <Tint $c="#e8606a">86</Tint></span></BarCell>
              <Spacer />
              <BarCell $w={1} $pad={0} $line="#5c5c5c" />
              <BarButton $w={124} $pad={5} $line="#4a4a4a">Level II<Corner /></BarButton>
            </LevelBar>
            <Books>
              <QuoteBook rows={BID_ROWS} side="Bid" size="BS" dir="down" />
              <QuoteBook rows={ASK_ROWS} side="Ask" size="AS" dir="up" />
            </Books>
          </Workspace>
          <Rail>
            {TABS.map(([name, h, on]) => (
              <RailTab key={name} $h={h} $on={on}><span>{name}</span></RailTab>
            ))}
          </Rail>
        </Body>
      </Shell>
    </>
  );
}
